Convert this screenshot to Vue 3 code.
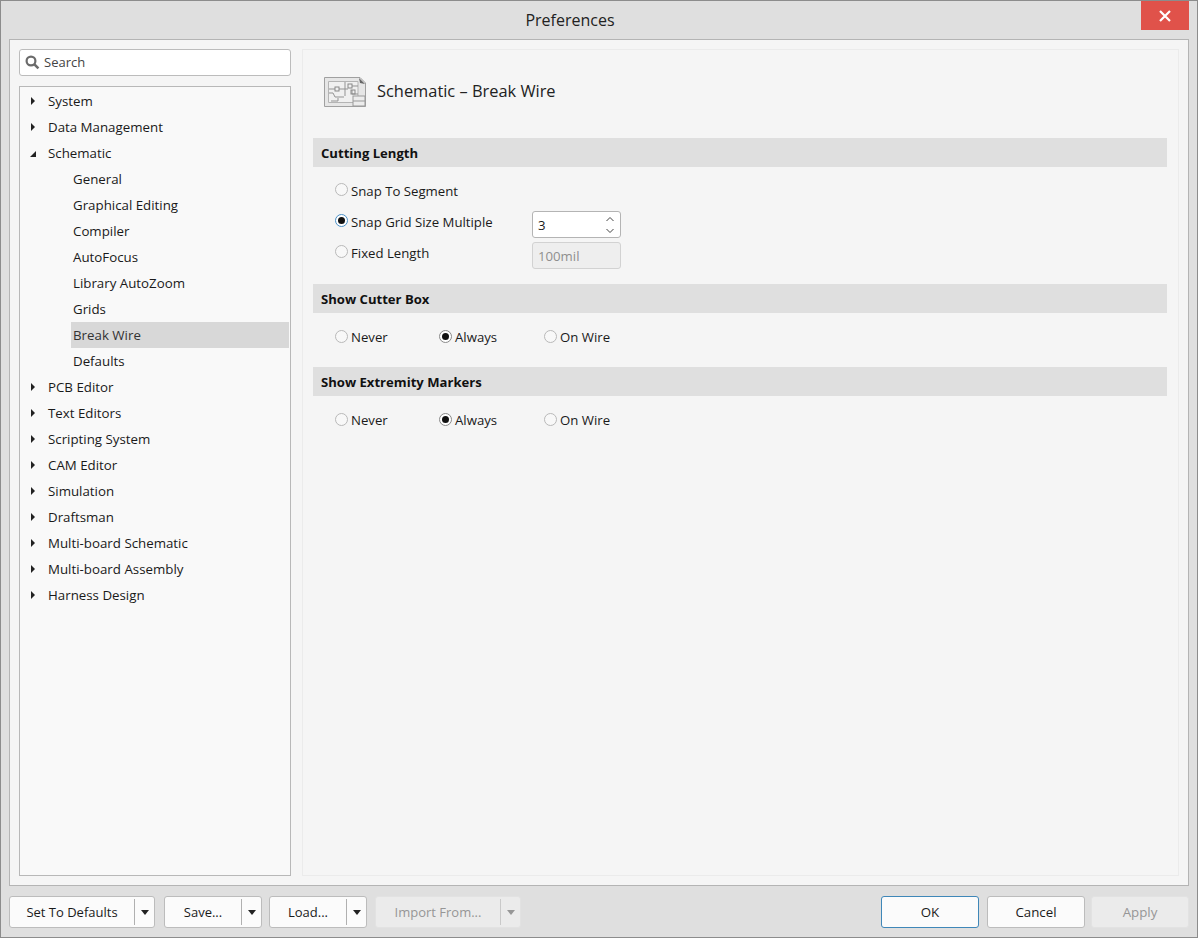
<!-- Preferences dialog: Schematic - Break Wire page -->
<template>
  <div class="window">
    <div class="title-bar">
      <span class="title">Preferences</span>
      <button class="close-btn">
        <svg width="12" height="12" viewBox="0 0 12 12"><path d="M1 1 L11 11 M11 1 L1 11" stroke="#fff" stroke-width="2.2" fill="none" /></svg>
      </button>
    </div>

    <div class="content">
      <!-- left column: search and tree -->
      <div class="left">
        <div class="search">
          <svg width="15" height="15" viewBox="0 0 15 15"><circle cx="6" cy="6" r="4.4" fill="none" stroke="#6b6b6b" stroke-width="2.2" /><path d="M9.4 9.4 L13.4 13.4" stroke="#6b6b6b" stroke-width="2.6" /></svg>
          <span>Search</span>
        </div>
        <div class="tree">
          <div v-for="item in tree" :key="item.label" class="tree-row" :class="{ child: item.child, selected: item.selected }">
            <span v-if="!item.child" class="arrow" :class="{ open: item.open }"></span>
            <span class="tree-label">{{ item.label }}</span>
          </div>
        </div>
      </div>

      <!-- right column: settings page -->
      <div class="page">
        <div class="page-head">
          <svg class="page-icon" width="42" height="30" viewBox="0 0 42 30">
            <path d="M0.5 0.5 H36 L41.5 6 V29.5 H0.5 Z" fill="#e6e6e6" stroke="#a0a0a0" />
            <path d="M4.5 4.5 H34 V25.5 H4.5 Z" fill="#f0f0f0" stroke="#b4b4b4" />
            <path d="M5 12 H11 M15 12 H24 M28 9 H34 M21 5 V19 M5 16 H9 L11 20 H20 M28 13 V17 H34 M7 24 H14 V21" fill="none" stroke="#939393" />
            <rect x="11" y="10" width="4" height="4" fill="none" stroke="#888" />
            <rect x="24" y="7" width="4" height="4" fill="none" stroke="#888" />
            <rect x="27" y="13" width="4" height="4" fill="none" stroke="#888" />
            <rect x="29" y="19" width="12" height="10" fill="#ececec" stroke="#999" />
            <path d="M29 24 H41" stroke="#999" />
            <path d="M35 1 L41 7 L36 6 Z" fill="#666" />
          </svg>
          <span class="page-title">Schematic – Break Wire</span>
        </div>

        <div class="section-bar first">Cutting Length</div>
        <div class="cut-rows">
          <div class="cut-row">
            <label class="radio-item"><span class="radio"></span>Snap To Segment</label>
          </div>
          <div class="cut-row">
            <label class="radio-item"><span class="radio on focus"></span>Snap Grid Size Multiple</label>
            <div class="input spin">
              <span>3</span>
              <svg width="10" height="20" viewBox="0 0 10 20"><path d="M1.5 6 L5 2.5 L8.5 6 M1.5 14 L5 17.5 L8.5 14" fill="none" stroke="#444" /></svg>
            </div>
          </div>
          <div class="cut-row">
            <label class="radio-item"><span class="radio"></span>Fixed Length</label>
            <div class="input disabled"><span>100mil</span></div>
          </div>
        </div>

        <template v-for="sec in sections" :key="sec">
          <div class="section-bar">{{ sec }}</div>
          <div class="choice-row">
            <label class="radio-item choice"><span class="radio"></span>Never</label>
            <label class="radio-item choice"><span class="radio on"></span>Always</label>
            <label class="radio-item choice"><span class="radio"></span>On Wire</label>
          </div>
        </template>
      </div>
    </div>

    <div class="footer">
      <div class="split-btn">
        <span class="split-text">Set To Defaults</span><span class="split-drop"><i></i></span>
      </div>
      <div class="split-btn short">
        <span class="split-text">Save...</span><span class="split-drop"><i></i></span>
      </div>
      <div class="split-btn short tight">
        <span class="split-text">Load...</span><span class="split-drop"><i></i></span>
      </div>
      <div class="split-btn off import">
        <span class="split-text">Import From...</span><span class="split-drop"><i></i></span>
      </div>
      <div class="spacer"></div>
      <button class="btn ok">OK</button>
      <button class="btn cancel">Cancel</button>
      <button class="btn off apply">Apply</button>
    </div>
  </div>
</template>

<script setup>
const tree = [
  { label: 'System' },
  { label: 'Data Management' },
  { label: 'Schematic', open: true },
  { label: 'General', child: true },
  { label: 'Graphical Editing', child: true },
  { label: 'Compiler', child: true },
  { label: 'AutoFocus', child: true },
  { label: 'Library AutoZoom', child: true },
  { label: 'Grids', child: true },
  { label: 'Break Wire', child: true, selected: true },
  { label: 'Defaults', child: true },
  { label: 'PCB Editor' },
  { label: 'Text Editors' },
  { label: 'Scripting System' },
  { label: 'CAM Editor' },
  { label: 'Simulation' },
  { label: 'Draftsman' },
  { label: 'Multi-board Schematic' },
  { label: 'Multi-board Assembly' },
  { label: 'Harness Design' },
]

const sections = ['Show Cutter Box', 'Show Extremity Markers']
</script>

<style>
html, body { margin: 0; background: #dfdfdf; }
</style>

<style scoped>
.window {
  box-sizing: border-box;
  width: 1198px;
  height: 938px;
  display: flex;
  flex-direction: column;
  background: #dfdfdf;
  border: 1px solid #8c8c8c;
  font-family: "Open Sans", "Noto Sans", sans-serif;
  font-size: 13.3px;
  color: #1a1a1a;
}

/* title bar */
.title-bar { height: 38px; flex: none; display: flex; align-items: center; justify-content: center; position: relative; }
.title { font-size: 16px; margin-left: -58px; margin-top: -1px; color: #222; }
.close-btn {
  position: absolute; top: 0; right: 8px;
  width: 48px; height: 29px; border: 0; padding: 0;
  background: #e0524a; display: flex; align-items: center; justify-content: center;
}

/* main area */
.content {
  flex: none;
  height: 847px;
  margin: 0 8px;
  box-sizing: border-box;
  display: flex;
  gap: 11px;
  padding: 9px;
  background: #f5f5f5;
  border: 1px solid #b4b4b4;
}
.left { width: 272px; flex: none; display: flex; flex-direction: column; gap: 10px; }
.search {
  height: 27px; box-sizing: border-box; flex: none;
  display: flex; align-items: center; gap: 4px; padding-left: 5px;
  background: #fff; border: 1px solid #bcbcbc; border-radius: 3px; color: #444;
}
.search span { margin-top: -2px; font-size: 13px; }
.tree {
  flex: 1; box-sizing: border-box; padding: 1px;
  background: #f9f9f9; border: 1px solid #b8b8b8;
}
.tree-row { height: 26px; display: flex; align-items: center; position: relative; padding-left: 27px; }
.tree-row.child { padding-left: 52px; }
.tree-row.selected { background: #d8d8d8; margin-left: 50px; padding-left: 2px; margin-right: 0; }
.tree-row.selected .tree-label { color: #333; }
.arrow {
  position: absolute; left: 10px; top: 9px;
  width: 0; height: 0;
  border-left: 4px solid #222;
  border-top: 4px solid transparent;
  border-bottom: 4px solid transparent;
}
.arrow.open {
  left: 9px; top: 11px;
  border: 0;
  border-right: 6px solid #222;
  border-top: 6px solid transparent;
}

/* settings page */
.page {
  flex: 1; box-sizing: border-box;
  padding: 0 10px;
  height: 827px;
  background: #f5f5f5;
  border: 1px solid #ebebeb;
}
.page-head { height: 88px; display: flex; align-items: center; padding-left: 11px; box-sizing: border-box; padding-bottom: 8px; }
.page-icon { margin-right: 11px; flex: none; margin-top: 4px; }
.page-title { font-size: 16.4px; color: #222; }
.section-bar {
  height: 29px; box-sizing: border-box; padding-left: 8px;
  display: flex; align-items: center;
  background: #dfdfdf; font-weight: 700; color: #111; font-size: 13.1px;
  margin-right: 1px;
}
.cut-rows { height: 117px; padding-top: 8px; box-sizing: border-box; font-size: 13.2px; }
.cut-row { height: 31px; display: flex; align-items: center; padding-left: 22px; position: relative; }
.radio-item { display: flex; align-items: center; gap: 3px; white-space: nowrap; }
.radio {
  width: 11px; height: 11px; border: 1px solid #b9b9b9; border-radius: 50%;
  background: #f8f8f8; display: inline-block; flex: none; position: relative; top: -1px;
}
.radio.on { border-color: #8a8a8a; background: #fff; }
.radio.on.focus { border-color: #4a90c8; }
.radio.on::after {
  content: ''; position: absolute; left: 2px; top: 2px;
  width: 7px; height: 7px; border-radius: 50%; background: #111;
}
.input {
  position: absolute; left: 219px; top: 5px;
  width: 89px; height: 27px; box-sizing: border-box;
  display: flex; align-items: center; justify-content: space-between;
  padding: 0 5px 0 5px; border: 1px solid #b4b4b4; border-radius: 3px; background: #fff;
}
.input.disabled { background: #eeeeee; border-color: #d2d2d2; color: #8e8e8e; }
.choice-row { height: 54px; display: flex; align-items: center; padding-left: 22px; box-sizing: border-box; padding-bottom: 6px; font-size: 13.2px; }
.choice { width: 104px; }
.choice:nth-child(2) { width: 105px; }
.choice:last-child { width: auto; }

/* footer buttons */
.footer { flex: 1; display: flex; align-items: flex-start; padding: 10px 8px 0; gap: 9px; }
.split-btn, .btn {
  height: 32px; box-sizing: border-box;
  background: #fbfbfb; border: 1px solid #bcbcbc; border-radius: 3px;
  font: inherit; color: #1a1a1a;
}
.split-btn { display: flex; align-items: center; width: 146px; }
.split-btn.short { width: 98px; }
.split-btn.tight { margin-left: -2px; }
.split-btn.import { margin-left: -1px; }
.split-btn .split-text { flex: 1; text-align: center; white-space: nowrap; font-size: 13px; }
.split-drop {
  width: 19px; height: 26px; flex: none; border-left: 1px solid #b0b0b0;
  display: flex; align-items: center; justify-content: center;
}
.split-drop i { width: 0; height: 0; border-left: 4.5px solid transparent; border-right: 4.5px solid transparent; border-top: 5px solid #222; }
.split-btn.off, .btn.off { background: #ebebeb; border-color: #e2e2e2; color: #969696; }
.split-btn.off .split-drop { border-left-color: #c9c9c9; }
.split-btn.off .split-drop i { border-top-color: #969696; }
.spacer { flex: 1; }
.btn { width: 98px; padding: 0; }
.btn.ok { border-color: #3f87b8; margin-right: -1px; }
.btn.cancel { margin-right: -2px; }
.btn.apply { width: 98px; margin-left: -1px; }
</style>
